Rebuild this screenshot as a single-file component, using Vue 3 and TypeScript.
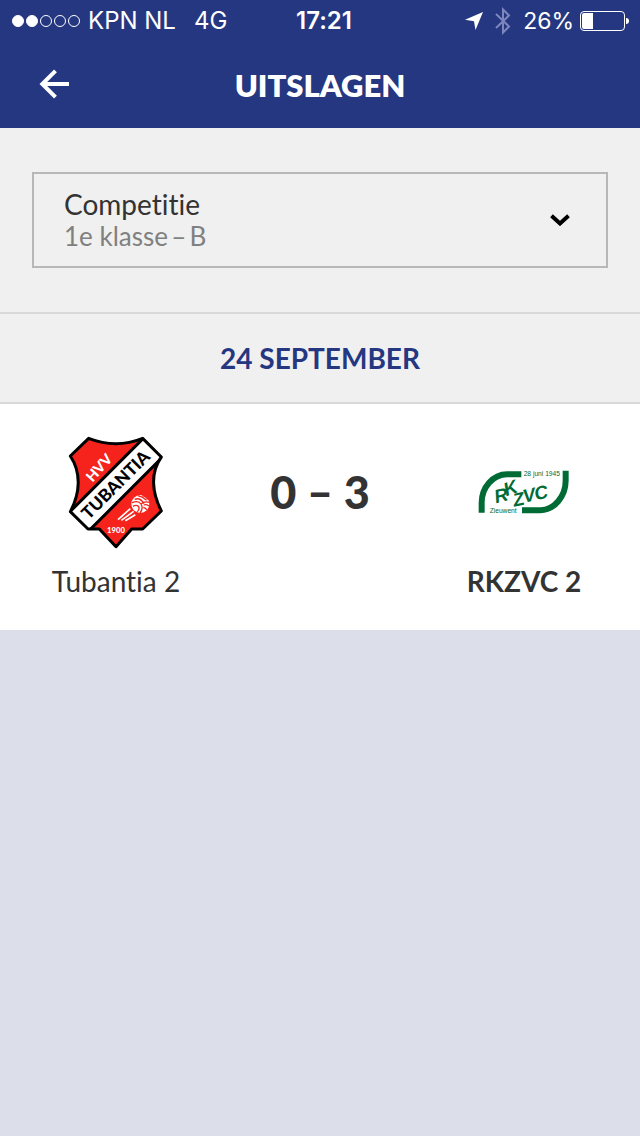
<script setup lang="ts">
import { ref } from 'vue'

interface Team {
  name: string
  logo: 'tubantia' | 'rkzvc'
}

interface Match {
  home: Team
  away: Team
  homeScore: number
  awayScore: number
}

// Thin spaces keep the dash close to its neighbours.
const competitions: string[] = ['1e klasse\u2009–\u2009B']
const competition = ref<string>(competitions[0])
const signal: boolean[] = [true, true, false, false, false]
const battery = 26

const matches: Match[] = [
  {
    home: { name: 'Tubantia 2', logo: 'tubantia' },
    away: { name: 'RKZVC 2', logo: 'rkzvc' },
    homeScore: 0,
    awayScore: 3,
  },
]
</script>

<template>
  <div class="app">
    <header class="top">
      <div class="status">
        <div class="status-left">
          <span class="dots">
            <i v-for="(on, i) in signal" :key="i" class="dot" :class="{ on }"></i>
          </span>
          <span>KPN NL</span>
          <span class="network">4G</span>
        </div>
        <span class="clock">17:21</span>
        <div class="status-right">
          <svg class="location" viewBox="0 0 18 18" aria-hidden="true">
            <path d="M18 0 10.5 18 9 9.3 0 7.8Z" fill="#fff" />
          </svg>
          <svg class="bluetooth" viewBox="0 0 16 28" aria-hidden="true">
            <path d="M1 7 14 19.500 8 25.500V2.500L14 8.500 1 21" fill="none" stroke="#7d87bd" stroke-width="2" />
          </svg>
          <span>{{ battery }}%</span>
          <span class="battery"><i class="level" :style="{ width: battery + '%' }"></i></span>
        </div>
      </div>
      <div class="bar">
        <button class="back" type="button" aria-label="Terug">
          <svg viewBox="0 0 30 30" aria-hidden="true">
            <path d="M29 14H3M15.500 0.800 2.300 14 15.500 27.200" fill="none" stroke="#fff" stroke-width="4" />
          </svg>
        </button>
        <h1>UITSLAGEN</h1>
      </div>
    </header>

    <section class="filter">
      <div class="field">
        <div class="field-text">
          <label for="competition">Competitie</label>
          <select id="competition" v-model="competition">
            <option v-for="c in competitions" :key="c" :value="c">{{ c }}</option>
          </select>
        </div>
        <svg class="chevron" viewBox="0 0 20 12" aria-hidden="true">
          <path d="M1.500 1.800 10 9.500 18.500 1.800" fill="none" stroke="#000" stroke-width="4" />
        </svg>
      </div>
    </section>

    <h2>24 SEPTEMBER</h2>

    <main>
      <article v-for="m in matches" :key="m.home.name" class="match">
        <div v-for="(team, side) in [m.home, m.away]" :key="team.name" class="team" :class="side === 0 ? 'home' : 'away'">
          <div class="logo">
            <svg v-if="team.logo === 'tubantia'" class="crest" viewBox="24 15 288 339" role="img" aria-label="HVV Tubantia 1900">
              <defs>
                <clipPath id="shield">
                  <path d="M86 22Q168 54 248 22L304 78C270 125 276 185 304 240L248 294H215L168 347 118 294H84L31 242C61 185 64 125 31 75Z" />
                </clipPath>
              </defs>
              <g clip-path="url(#shield)">
                <rect x="24" y="15" width="288" height="339" fill="#f5231b" />
                <path d="M20 252 262 10 318 68 76 310Z" fill="#fff" stroke="#000" stroke-width="9" />
              </g>
              <path d="M86 22Q168 54 248 22L304 78C270 125 276 185 304 240L248 294H215L168 347 118 294H84L31 242C61 185 64 125 31 75Z" fill="none" stroke="#000" stroke-width="9" stroke-linejoin="round" />
              <text x="116" y="126" transform="rotate(-48 116 109)" class="crest-text hvv">HVV</text>
              <text x="168" y="179" transform="rotate(-45 168 162)" class="crest-text club">TUBANTIA</text>
              <text x="168" y="305" class="crest-text year">1900</text>
              <path d="M211 233 174 266M221 241 184 268M226 251 196 269" fill="none" stroke="#fff" stroke-width="5" />
              <circle cx="241" cy="219" r="27" fill="#fff" />
              <g fill="none" stroke="#f5231b" stroke-width="4">
                <path d="M216 215Q235 207 243 219T240 246M224 205Q240 198 252 218M243 219Q253 210 268 214M233 194Q247 196 260 208M251 222Q259 219 267 225M250 229Q257 231 261 237M219 226Q229 220 235 226T231 244M247 193Q257 197 265 205" />
              </g>
            </svg>
            <svg v-else class="mark" viewBox="25 31 276 134" role="img" aria-label="RKZVC Zieuwent, 28 juni 1945">
              <g fill="none" stroke="#006b35" stroke-width="18">
                <path d="M155 43H112C70 43 36 83 36 128V159" />
                <path d="M288 33V62C288 109 254 151 212 151H157" />
              </g>
              <g class="mark-text">
                <text x="162" y="48">28 juni 1945</text>
                <text x="60" y="160">Zieuwent</text>
              </g>
              <g class="mark-bold">
                <text x="79" y="130" transform="rotate(-14 79 130)">R</text>
                <text x="110" y="109" transform="rotate(-20 110 109)">K</text>
                <text x="134" y="141" transform="rotate(-12 134 141)">Z</text>
                <text x="164" y="129" transform="rotate(-12 164 129)">V</text>
                <text x="198" y="121" transform="rotate(-12 198 121)">C</text>
              </g>
            </svg>
          </div>
          <span class="name">{{ team.name }}</span>
        </div>
        <p class="score">{{ m.homeScore }} – {{ m.awayScore }}</p>
      </article>
    </main>
  </div>
</template>

<style>
body {
  background: #dcdeea;
}
</style>

<style scoped>
.app {
  font-family: Lato, 'Open Sans', sans-serif;
  font-variant-ligatures: none;
  color: #333;
  font-size: 28px;
  line-height: 32px;
}

.top {
  background: #253781;
  color: #fff;
}

.status {
  display: grid;
  grid-template-columns: 1fr auto 1fr;
  align-items: center;
  height: 42px;
  padding: 0 12px;
  font-family: Inter, 'Liberation Sans', sans-serif;
  font-size: 24px;
}

.status-left,
.status-right {
  display: flex;
  align-items: center;
  gap: 8px;
}

.status-right {
  justify-content: flex-end;
  gap: 6px;
  font-size: 23px;
}

.dots {
  display: flex;
  gap: 2px;
}

.dot {
  box-sizing: border-box;
  width: 12px;
  height: 12px;
  border: 1px solid #fff;
  border-radius: 50%;
}

.dot.on {
  background: #fff;
}

.network {
  margin-left: 10px;
}

.clock {
  padding-left: 8px;
  font-weight: 600;
}

.location {
  width: 18px;
  height: 18px;
}

.bluetooth {
  width: 16px;
  height: 28px;
  margin: 0 6px;
}

.battery {
  position: relative;
  box-sizing: border-box;
  width: 45px;
  height: 20px;
  margin-right: 3px;
  padding: 1px;
  border: 1px solid #fff;
  border-radius: 4px;
}

.battery::after {
  content: '';
  position: absolute;
  top: 6px;
  right: -5px;
  width: 3px;
  height: 6px;
  border-radius: 0 3px 3px 0;
  background: #fff;
}

.level {
  display: block;
  height: 100%;
  border-radius: 2px 0 0 2px;
  background: #fff;
}

.bar {
  display: grid;
  grid-template-columns: 30px 1fr 30px;
  align-items: center;
  height: 86px;
  padding: 0 40px;
}

.back {
  padding: 0;
  border: 0;
  background: none;
}

.back svg {
  display: block;
  overflow: visible;
  width: 30px;
  height: 30px;
}

h1,
h2,
p {
  margin: 0;
  text-align: center;
}

h1 {
  font-size: 31px;
  font-weight: 800;
  line-height: 40px;
}

.filter {
  padding: 44px 32px;
  background: #f0f0f0;
}

.field {
  display: flex;
  align-items: center;
  padding: 14px 36px 14px 30px;
  border: 2px solid #b7b7b7;
}

.field-text {
  display: flex;
  flex: 1;
  flex-direction: column;
}

select {
  appearance: none;
  width: 100%;
  height: 32px;
  padding: 0;
  border: 0;
  background: none;
  color: #808080;
  font: inherit;
  font-size: 26px;
}

.chevron {
  width: 20px;
  height: 12px;
}

h2 {
  padding: 28px 0;
  border-top: 2px solid #d9d9d9;
  border-bottom: 2px solid #d9d9d9;
  background: #f0f0f0;
  color: #253781;
  font-size: 28px;
}

.match {
  display: grid;
  grid-template-columns: 7fr 10fr 7fr;
  padding: 32px 32px 33px;
  background: #fff;
}

.team {
  display: flex;
  flex-direction: column;
  align-items: center;
  gap: 17px;
  grid-row: 1;
}

.home {
  grid-column: 1;
}

.away {
  grid-column: 3;
}

.away .name {
  font-weight: 700;
}

.logo {
  display: flex;
  align-items: center;
  height: 112px;
}

.crest {
  width: 96px;
  height: 113px;
}

.mark {
  width: 92px;
  height: 45px;
}

.score {
  grid-row: 1;
  grid-column: 2;
  font-size: 45px;
  font-weight: 900;
  line-height: 112px;
}

.crest-text {
  font-family: Lato, sans-serif;
  font-weight: 900;
  text-anchor: middle;
}

.hvv {
  fill: #fff;
  font-size: 43px;
}

.club {
  fill: #000;
  font-size: 52px;
}

.year {
  fill: #fff;
  font-size: 23px;
}

.mark-text {
  fill: #006b35;
  font-family: 'Liberation Sans', sans-serif;
  font-size: 20px;
}

.mark-bold {
  fill: #006b35;
  font-family: 'Liberation Sans', sans-serif;
  font-size: 56px;
  font-style: italic;
  font-weight: 700;
}
</style>
